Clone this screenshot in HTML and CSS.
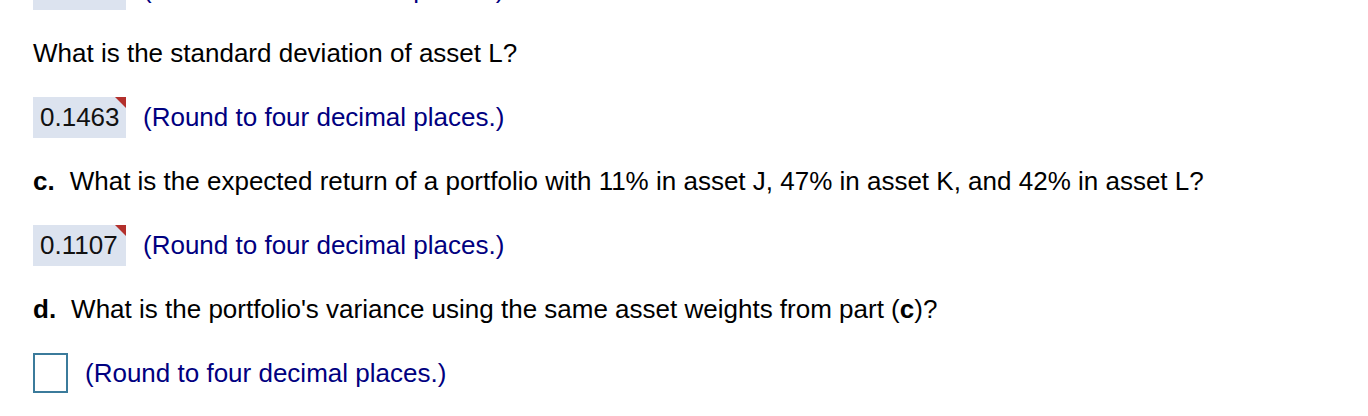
FILE: index.html
```html
<!DOCTYPE html>
<html>
<head>
<meta charset="utf-8">
<link rel="stylesheet" href="styles.css">
</head>
<body>
<div class="content">
  <div class="row">
    <span class="answer filled"><span class="val">0.0000</span><span class="flag"></span></span>
    <span class="hint">(Round to four decimal places.)</span>
  </div>
  <div class="row">
    <p class="q">What is the standard deviation of asset L?</p>
  </div>
  <div class="row">
    <span class="answer filled"><span class="val">0.1463</span><span class="flag"></span></span>
    <span class="hint">(Round to four decimal places.)</span>
  </div>
  <div class="row">
    <p class="q"><b class="lbl">c.</b>What is the expected return of a portfolio with 11% in asset J, 47% in asset K, and 42% in asset L?</p>
  </div>
  <div class="row">
    <span class="answer filled"><span class="val">0.1107</span><span class="flag"></span></span>
    <span class="hint">(Round to four decimal places.)</span>
  </div>
  <div class="row">
    <p class="q"><b class="lbl">d.</b>What is the portfolio's variance using the same asset weights from part (<b>c</b>)?</p>
  </div>
  <div class="row">
    <span class="answer empty"></span>
    <span class="hint">(Round to four decimal places.)</span>
  </div>
</div>
</body>
</html>
```
FILE: styles.css
```css
html, body {
  margin: 0;
  padding: 0;
  background: #ffffff;
}
body {
  font-family: "Liberation Sans", Arial, sans-serif;
  font-size: 26px;
  color: #000000;
  overflow: hidden;
}
.content {
  padding-left: 33px;
  margin-top: -43px;
  display: flex;
  flex-direction: column;
}
.row {
  height: 64px;
  display: flex;
  align-items: center;
  gap: 17px;
}
.q {
  margin: 0;
  line-height: 30px;
}
.lbl {
  font-weight: bold;
  margin-right: 15px;
}
.answer {
  position: relative;
  box-sizing: border-box;
  display: inline-flex;
  align-items: center;
}
.answer.filled {
  width: 93px;
  height: 41px;
  background: #dce3ef;
  padding-left: 7px;
  color: #111111;
}
.answer.empty {
  width: 35px;
  height: 40px;
  border: 2px solid #3b7b9b;
  background: #ffffff;
}
.flag {
  position: absolute;
  top: 0;
  right: 0;
  width: 0;
  height: 0;
  border-top: 11px solid #b3302c;
  border-left: 11px solid transparent;
}
.hint {
  color: #000080;
}
```
